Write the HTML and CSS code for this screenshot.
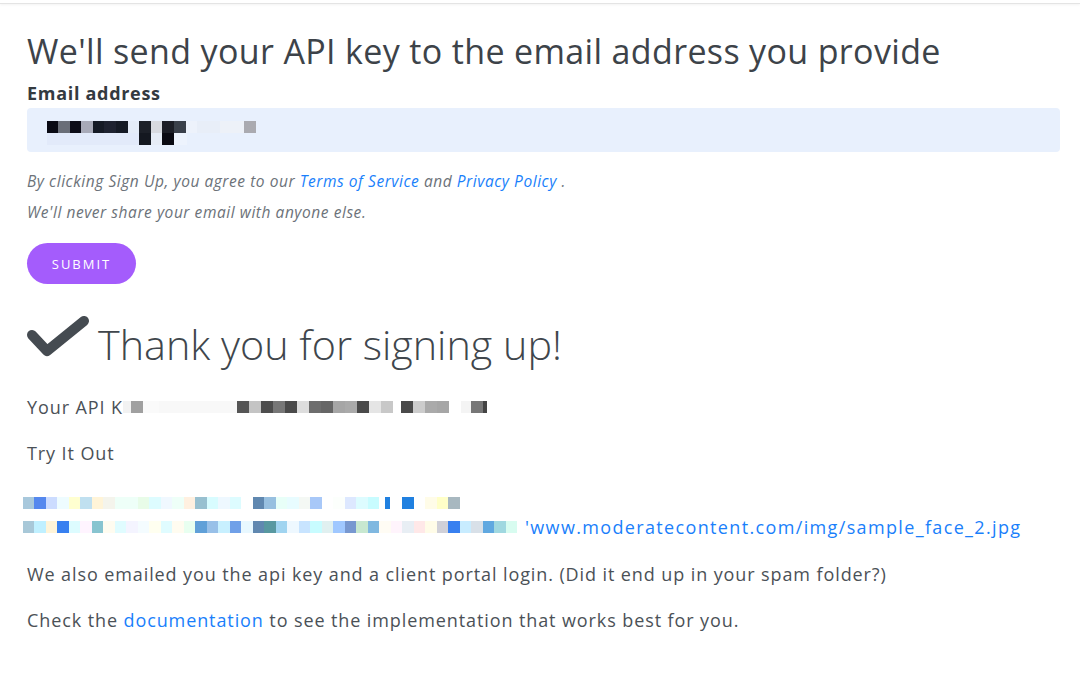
FILE: index.html
```html
<!DOCTYPE html>
<html lang="en">
<head>
<meta charset="utf-8">
<title>API key signup</title>
<link rel="stylesheet" href="styles.css">
</head>
<body>
<div class="topline"></div>
<main class="page">
  <h1 class="title">We'll send your API key to the email address you provide</h1>
  <form class="signup">
    <label class="label" for="email">Email address</label>
    <div class="input">
      <div class="mosaic email-top"></div>
      <div class="mosaic email-bottom"></div>
    </div>
    <p class="note">By clicking Sign Up, you agree to our <a href="#">Terms of Service</a> and <a href="#">Privacy Policy</a> .</p>
    <p class="note">We'll never share your email with anyone else.</p>
    <button type="button" class="submit">SUBMIT</button>
  </form>

  <div class="thanks">
    <svg class="check" width="62" height="42" viewBox="0 0 62 42" aria-hidden="true">
      <polyline points="5,19 20,35 57,5" fill="none" stroke="#454b51" stroke-width="10" stroke-linecap="round" stroke-linejoin="round"/>
    </svg>
    <h2 class="thanks-title">Thank you for signing up!</h2>
  </div>

  <p class="text key-line">Your API K<span class="mosaic key"></span></p>
  <p class="text">Try It Out</p>
  <div class="tryout">
    <div class="mosaic url-top"></div>
    <div class="url-row"><div class="mosaic url-bottom"></div><a href="#" class="url">'www.moderatecontent.com/img/sample_face_2.jpg</a></div>
  </div>
  <p class="text">We also emailed you the api key and a client portal login. (Did it end up in your spam folder?)</p>
  <p class="text">Check the <a href="#">documentation</a> to see the implementation that works best for you.</p>
</main>
</body>
</html>
```

FILE: styles.css
```css
* { box-sizing: border-box; }
html, body { margin: 0; padding: 0; background: #fff; }
body {
  font-family: "Open Sans", "DejaVu Sans", sans-serif;
  color: #4b5157;
}
a { color: #1a7ffb; text-decoration: none; }

.topline {
  height: 5px;
  border-bottom: 1px solid #e4e4e4;
  box-shadow: 0 1px 3px rgba(0,0,0,0.05);
  margin-top: -1px;
}

.page {
  padding: 0 20px 0 27px;
}

.title {
  margin: 24px 0 0;
  font-size: 34px;
  line-height: 46px;
  font-weight: 400;
  color: #3d4349;
  letter-spacing: 0.35px;
}

.label {
  display: block;
  margin-top: 8px;
  font-size: 18px;
  line-height: 22px;
  font-weight: 700;
  color: #343a40;
  letter-spacing: 0.7px;
}

.input {
  margin-top: 4px;
  width: 1033px;
  height: 44px;
  background: #e8f0fd;
  border-radius: 4px;
  padding: 13px 0 0 20px;
}

.mosaic { height: 12px; }

.email-top {
  width: 235px;
  background: linear-gradient(to right,
    #0a0a14 0 11px, #6a6e78 11px 23px, #0c0c18 23px 34px, #a8aab8 34px 46px,
    #151a25 46px 57px, #1e2230 57px 69px, #151a25 69px 81px, #e4ecf8 81px 92px,
    #1c2028 92px 104px, #d8dae0 104px 115px, #1c1e26 115px 127px, #3a404a 127px 139px,
    #edf2fb 139px 150px, #e8eef8 150px 173px, #edf1f8 173px 197px, #aaaab0 197px 209px,
    transparent 209px);
}
.email-bottom {
  width: 140px;
  background: linear-gradient(to right,
    #e2eafa 0 92px, #141820 92px 104px, #e6ecf6 104px 115px, #0a0a12 115px 127px,
    #edf3fd 127px 140px);
}

.note {
  margin: 0;
  font-size: 15.5px;
  font-style: italic;
  color: #6c7279;
  line-height: 31px;
  letter-spacing: 0.55px;
}
.note:first-of-type { margin-top: 14px; }

.submit {
  margin-top: 15px;
  width: 109px;
  height: 41px;
  border: none;
  border-radius: 21px;
  background: #a45cfc;
  color: #fff;
  font-family: "Open Sans", sans-serif;
  font-size: 13px;
  letter-spacing: 2px;
  padding: 0;
}

.thanks {
  margin-top: 32px;
  display: flex;
  align-items: flex-end;
  gap: 9px;
}
.check { display: block; margin-bottom: 3px; }
.thanks-title {
  margin: 0;
  font-size: 41.3px;
  line-height: 44px;
  font-weight: 300;
  color: #40464c;
  position: relative;
  top: 5px;
}

.text {
  margin: 0;
  font-size: 18px;
  line-height: 46px;
  font-weight: 400;
  color: #4b5157;
  letter-spacing: 0.9px;
}
.key-line { margin-top: 23px; display: flex; align-items: center; }
.key {
  display: inline-block;
  width: 364px;
  background: linear-gradient(to right,
    #f2f2f2 0 8px, #a0a0a0 8px 20px, #fafafa 20px 36px, #f8f8f8 36px 114px,
    #555 114px 126px, #c4c4c4 126px 138px, #4d4d4d 138px 150px, #777 150px 162px,
    #4a4a4a 162px 174px, #ddd 174px 186px, #6d6d6d 186px 198px, #666 198px 210px,
    #a6a6a6 210px 222px, #aaa 222px 234px, #4a4a4a 234px 246px, #e5e5e5 246px 258px,
    #c8c8c8 258px 270px, #fff 270px 278px, #4a4a4a 278px 290px, #ccc 290px 302px,
    #aaa 302px 314px, #a6a6a6 314px 326px, #fff 326px 338px, #f4f4f4 338px 348px,
    #777 348px 360px, #444 360px 364px);
}

.tryout { margin: 21px 0 0 -4px; }
.url-top {
  width: 437px;
  background: linear-gradient(to right,
    #a8c8dc 0 11px, #5588ee 11px 23px, #ccdcff 23px 34px, #eefcff 34px 46px,
    #ffffd0 46px 57px, #c0e0f0 57px 69px, #fff4d8 69px 80px, #f4f4ec 80px 92px,
    #eefff8 92px 115px, #e8fce8 115px 126px, #ddfcff 126px 138px, #f0f8ff 138px 149px,
    #eefff8 149px 161px, #fff0e0 161px 172px, #98c0d0 172px 184px, #d8fcff 184px 195px,
    #eef8ff 195px 207px, #ddfcff 207px 218px, #fff 218px 230px, #6088b0 230px 241px,
    #98c0e0 241px 253px, #e8fff8 253px 264px, #e8fcff 264px 276px, #f4f8f4 276px 287px,
    #a8c8f8 287px 299px, #fff 299px 310px, #fcfffc 310px 322px, #dde8ff 322px 333px,
    #ddfcff 333px 345px, #c8fcff 345px 356px, #fff 356px 362px, #2080e0 362px 367px,
    #fff 367px 379px, #2080e0 379px 391px, #fff 391px 402px, #fffce8 402px 414px,
    #ffffc8 414px 425px, #a8b8c0 425px 437px);
}
.url-row {
  display: flex;
  align-items: center;
  margin-top: 6px;
}
.url-bottom {
  width: 494px;
  flex: none;
  background: linear-gradient(to right,
    #a8c8d8 0 11px, #c0f0ff 11px 23px, #fff4d8 23px 34px, #3880f0 34px 46px,
    #ddfcff 46px 57px, #fff4ff 57px 69px, #88c4d0 69px 80px, #fffcf0 80px 92px,
    #e0fcff 92px 103px, #f4f4ff 103px 115px, #f4fcff 115px 126px, #fffff0 126px 138px,
    #e0fcff 138px 149px, #fffcf0 149px 161px, #e8fff0 161px 172px, #60a0d8 172px 184px,
    #98c0e8 184px 195px, #c8f0ff 195px 207px, #70a0e8 207px 218px, #e8f8ff 218px 230px,
    #6088b0 230px 241px, #5898a0 241px 253px, #a0d4f0 253px 264px, #eef8ff 264px 276px,
    #c8e4ff 276px 287px, #c8fcff 287px 299px, #e0f0f0 299px 310px, #a0c8ff 310px 322px,
    #7898d0 322px 333px, #c8e8d0 333px 345px, #80b8e0 345px 356px, #fffcf4 356px 368px,
    #fff4fc 368px 379px, #e8eef4 379px 391px, #ffe8e8 391px 402px, #fffce8 402px 414px,
    #d0d0d8 414px 425px, #3880f0 425px 437px, #c8ecff 437px 448px, #d8e0e8 448px 460px,
    #60a8e0 460px 471px, #a0d8e0 471px 483px, #d8fcf0 483px 494px);
}
.url {
  font-size: 18px;
  line-height: 24px;
  margin-left: 8px;
  letter-spacing: 1.35px;
}
.tryout + .text { margin-top: 12px; }
```
